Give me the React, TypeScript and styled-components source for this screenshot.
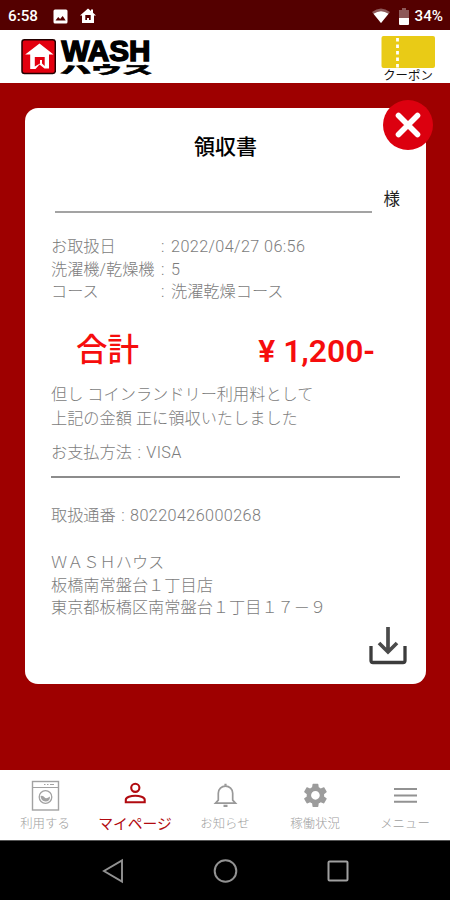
import React from "react";
import styled, { createGlobalStyle } from "styled-components";

const Global = createGlobalStyle`
  * { box-sizing: border-box; }
  html, body { margin: 0; padding: 0; }
  body { font-family: Roboto, "Noto Sans CJK JP", sans-serif; background: #9e0000; }
  svg { display: block; flex: none; }
`;

const Screen = styled.div`
  width: 450px;
  height: 900px;
  display: flex;
  flex-direction: column;
  overflow: hidden;
  background: #9e0000;
`;

const StatusBar = styled.div`
  height: 30px;
  flex: none;
  display: flex;
  align-items: center;
  justify-content: space-between;
  padding: 2px 7px 0 8px;
  background: #540000;
  color: #fff;
  font-size: 15.2px;
  font-weight: 500;
`;

const StatusGroup = styled.div<{ $gap: number }>`
  display: flex;
  align-items: center;
  gap: ${(p) => p.$gap}px;
`;

const Header = styled.header`
  height: 53px;
  flex: none;
  display: flex;
  justify-content: space-between;
  padding: 6px 15px 0 21px;
  background: #fff;
`;

const Brand = styled.div`
  display: flex;
  gap: 5px;
  padding-top: 3px;
`;

const WordMark = styled.div`
  display: flex;
  flex-direction: column;
  width: 92px;
`;

const Coupon = styled.div`
  width: 54px;
  display: flex;
  flex-direction: column;
  align-items: center;
  color: #111;
  font-size: 12.4px;
  line-height: 13px;
  white-space: nowrap;
`;

const CouponLabel = styled.span`
  margin-top: 1px;
`;

const Main = styled.main`
  flex: 1;
  padding: 25px 24px 0 25px;
`;

const Card = styled.section`
  position: relative;
  height: 575.5px;
  padding: 0 26px;
  border-radius: 13px;
  background: #fff;
  color: #7c7c7c;
  font-size: 16.2px;
  font-weight: 300;
  line-height: 22.5px;
  white-space: nowrap;
`;

const CloseButton = styled.button`
  position: absolute;
  top: -8px;
  right: -7px;
  width: 50px;
  height: 50px;
  padding: 0;
  border: 0;
  border-radius: 50%;
  background: #dc000f;
`;

const Title = styled.h1`
  margin: 0;
  padding-top: 24px;
  color: #000;
  font-size: 21px;
  font-weight: 500;
  line-height: 31px;
  text-align: center;
`;

const NameRow = styled.div`
  height: 51px;
  display: flex;
  justify-content: space-between;
  align-items: flex-end;
  padding-left: 4px;
`;

const NameLine = styled.div`
  width: 317px;
  height: 2px;
  margin-bottom: 1px;
  background: #a3a3a3;
`;

const Honorific = styled.span`
  color: #222;
  font-size: 16.5px;
  font-weight: 400;
  margin-bottom: 3px;
`;

const Details = styled.dl`
  display: grid;
  grid-template-columns: 110px 10px auto;
  grid-auto-rows: 22.5px;
  margin: 22px 0 0;
`;

const Term = styled.dt``;
const Value = styled.dd<{ $spaced?: boolean }>`
  margin: 0;
  letter-spacing: ${(p) => (p.$spaced ? 0.4 : 0)}px;
`;

const Total = styled.div`
  display: flex;
  justify-content: space-between;
  align-items: center;
  height: 46px;
  margin-top: 24.5px;
  padding: 0 25px 0 25px;
  color: #f60d0d;
  font-size: 31.5px;
  font-weight: 500;
`;

const Amount = styled.span`
  font-weight: 600;
  font-size: 31.8px;
`;

const Note = styled.p`
  margin: 8.5px 0 0;
  line-height: 24px;
`;

const Inline = styled.p<{ $top: number }>`
  margin: ${(p) => p.$top}px 0 0;
  word-spacing: 1.5px;
`;

const Latin = styled.span`
  letter-spacing: 0.4px;
`;

const Rule = styled.hr`
  height: 2px;
  margin: 11px 0 0;
  border: 0;
  background: #8c8c8c;
`;

const Shop = styled.address`
  margin-top: 25px;
  font-style: normal;
`;

const Download = styled.div`
  display: flex;
  justify-content: flex-end;
  margin: 6.5px -7px 0 0;
`;

const TabBar = styled.nav`
  height: 71px;
  flex: none;
  display: grid;
  grid-template-columns: repeat(5, 90px);
  background: #fff;
  border-bottom: 1px solid #555;
`;

const Tab = styled.div<{ $active?: boolean }>`
  display: flex;
  flex-direction: column;
  align-items: center;
  padding-top: 9px;
  color: ${(p) => (p.$active ? "#b10b10" : "#a0a0a0")};
  font-size: ${(p) => (p.$active ? 14.8 : 12.4)}px;
  font-weight: ${(p) => (p.$active ? 400 : 300)};
  line-height: 18px;
  white-space: nowrap;
`;

const TabLabel = styled.span`
  margin-top: 2px;
`;

const SystemNav = styled.div`
  height: 59px;
  flex: none;
  display: flex;
  justify-content: space-between;
  align-items: center;
  padding: 0 100px;
  background: #000;
`;

const Logo = () => (
  <Brand>
    <svg width="35" height="36" viewBox="21 39 35 36">
      <rect x="22" y="39.8" width="33.3" height="33.8" rx="2.5" fill="#e3000f" stroke="#240000" strokeWidth="1.5" />
      <path d="M39.5 43.5 53.5 54.5H49V68.5H44.5L39.5 64.500 35.5 69H30.2V54.5H25.2Z" fill="#fff" />
      <path d="M34.8 57H44.700V66L42 63.500V60H40V63.500L34.800 66.500Z" fill="#e3000f" />
    </svg>
    <WordMark>
      <svg width="92" height="23" viewBox="0 0 92 23" overflow="visible">
        <text x="0.5" y="21.6" textLength="89" lengthAdjust="spacingAndGlyphs" fontFamily="Liberation Sans" fontWeight="700" fontSize="30" stroke="#000" strokeWidth="1.5">WASH</text>
      </svg>
      <svg width="92" height="14" viewBox="0 0 92 14" overflow="visible">
        <text transform="translate(-1 11.700) scale(1 .37)" textLength="93" lengthAdjust="spacingAndGlyphs" fontFamily="Noto Sans CJK JP" fontWeight="900" fontSize="31" stroke="#000" strokeWidth="1.5">ハウス</text>
      </svg>
    </WordMark>
  </Brand>
);

const CouponIcon = () => (
  <svg width="54" height="32" viewBox="0 0 54 32">
    <rect x=".5" width="53.5" height="32" rx="2" fill="#e9cb16" />
    <path d="M16.5 0V32" stroke="#fff" strokeWidth="2.8" strokeDasharray="3.5 3" strokeDashoffset="-2" />
  </svg>
);

const tabs = [
  {
    label: "利用する",
    icon: (
      <svg width="30" height="34" viewBox="0 0 30 34" fill="none" stroke="#a2a2a2">
        <rect x="2.5" y="2.5" width="26" height="28.5" strokeWidth="1.4" />
        <path d="M2 8.500H29M14 5.500h1.500M17 5.500h1.500M20 5.500h4" strokeWidth="1" />
        <circle cx="15.5" cy="18" r="6.3" strokeWidth="1.3" />
        <path d="M10.500 17q2.500-1 4 1.200t5.500-.8q0 5-4.500 5t-5-5.400Z" fill="#a2a2a2" stroke="none" />
      </svg>
    ),
  },
  {
    label: "マイページ",
    active: true,
    icon: (
      <svg width="30" height="34" viewBox="0 0 30 34" fill="none" stroke="#b10b10" strokeWidth="2.1">
        <circle cx="15.3" cy="8.8" r="4.1" />
        <path d="M5.800 23.200v-2.400C5.800 18 11 16.700 15.200 16.700s9.500 1.300 9.500 4.100v2.400Z" />
      </svg>
    ),
  },
  {
    label: "お知らせ",
    icon: (
      <svg width="30" height="34" viewBox="0 0 30 34" fill="none" stroke="#999" strokeWidth="1.7">
        <path d="M5.500 24.200h20l-2.800-3v-7c0-4-3.200-7-7.200-7s-7.200 3-7.200 7v7Z" />
        <path d="M13.500 26.800h4M15.500 4.800v2" strokeWidth="2.2" />
      </svg>
    ),
  },
  {
    label: "稼働状況",
    icon: (
      <svg width="30" height="34" viewBox="0 0 30 34">
        <path
          transform="translate(.9 1.800) scale(1.210)"
          fill="#9c9c9c"
          d="M19.140 12.940c.04-.3.060-.61.060-.94 0-.32-.02-.64-.07-.94l2.030-1.580c.18-.14.23-.41.12-.61l-1.920-3.320c-.12-.22-.37-.29-.59-.22l-2.390.96c-.5-.38-1.030-.7-1.620-.94l-.36-2.540c-.04-.24-.24-.41-.48-.41h-3.840c-.24 0-.43.17-.47.410l-.36 2.540c-.59.240-1.130.57-1.620.94l-2.390-.96c-.22-.08-.47 0-.59.220L2.740 8.870c-.12.210-.08.470.12.610l2.030 1.580c-.05.3-.09.63-.09.94s.02.640.07.940l-2.030 1.580c-.18.140-.23.410-.12.610l1.920 3.320c.12.220.37.290.59.220l2.390-.96c.5.380 1.030.7 1.620.940l.36 2.540c.05.240.24.410.48.410h3.840c.24 0 .44-.17.470-.41l.36-2.540c.59-.24 1.130-.56 1.620-.94l2.390.96c.22.080.47 0 .59-.22l1.920-3.320c.12-.22.070-.47-.12-.61l-2.010-1.580zM12 15.600c-1.980 0-3.600-1.620-3.600-3.600s1.620-3.600 3.600-3.600 3.600 1.620 3.600 3.600-1.620 3.600-3.600 3.600z"
        />
      </svg>
    ),
  },
  {
    label: "メニュー",
    icon: (
      <svg width="30" height="34" viewBox="0 0 30 34" stroke="#929292" strokeWidth="1.9">
        <path d="M4 10H27M4 16.500H27M4 22.700H27" />
      </svg>
    ),
  },
];

const details = [
  ["お取扱日", "2022/04/27 06:56"],
  ["洗濯機/乾燥機", "5"],
  ["コース", "洗濯乾燥コース"],
];

export default function App() {
  return (
    <Screen>
      <Global />
      <StatusBar>
        <StatusGroup $gap={15}>
          <span>6:58</span>
          <StatusGroup $gap={12}>
            <svg width="15" height="15" viewBox="0 0 15 15">
              <rect x=".5" y=".5" width="14" height="14" rx="1.5" fill="#fff" />
              <path d="m2.500 11.500 2.700-3.500 1.900 2.100 2.600-3.100 3 4.500Z" fill="#540000" />
            </svg>
            <svg width="16" height="16" viewBox="0 0 16 16">
              <path d="M8 .5 11 3V1.500h2v3.200L16 7.500h-2V15H2V7.500H0Z" fill="#fff" />
              <path d="M5.300 7h5.400v5H9v-2H7v2H5.300Z" fill="#540000" />
            </svg>
          </StatusGroup>
        </StatusGroup>
        <StatusGroup $gap={6}>
          <StatusGroup $gap={9}>
            <svg width="18" height="16" viewBox="0 0 18 16">
              <path d="M0 4Q9-3 18 4L9 15Z" fill="#8d5959" />
              <path d="M1.500 5.800Q9 .500 16.500 5.800L9 15Z" fill="#fff" />
            </svg>
            <svg width="10" height="17" viewBox="0 0 10 17">
              <path d="M0 2h3V0h4v2h3v8H0Z" fill="#8d5959" />
              <path d="M0 10h10v6q0 1-1 1H1q-1 0-1-1Z" fill="#fff" />
            </svg>
          </StatusGroup>
          <span>34%</span>
        </StatusGroup>
      </StatusBar>
      <Header>
        <Logo />
        <Coupon>
          <CouponIcon />
          <CouponLabel>クーポン</CouponLabel>
        </Coupon>
      </Header>
      <Main>
        <Card>
          <Title>領収書</Title>
          <NameRow>
            <NameLine />
            <Honorific>様</Honorific>
          </NameRow>
          <Details>
            {details.map(([term, value], i) => (
              <React.Fragment key={term}>
                <Term>{term}</Term>
                <span>:</span>
                <Value $spaced={i === 0}>{value}</Value>
              </React.Fragment>
            ))}
          </Details>
          <Total>
            <span>合計</span>
            <Amount>¥ 1,200-</Amount>
          </Total>
          <Note>
            但し コインランドリー利用料として
            <br />
            上記の金額 正に領収いたしました
          </Note>
          <Inline $top={11.5}>
            お支払方法 : <Latin>VISA</Latin>
          </Inline>
          <Rule />
          <Inline $top={27}>
            取扱通番 : <Latin>80220426000268</Latin>
          </Inline>
          <Shop>
            ＷＡＳＨハウス
            <br />
            板橋南常盤台１丁目店
            <br />
            東京都板橋区南常盤台１丁目１７－９
          </Shop>
          <Download>
            <svg width="38" height="39" viewBox="0 0 38 39" fill="none" stroke="#3c3c3c">
              <path d="M2 20v14.500q0 2 2 2h30q2 0 2-2V20" strokeWidth="3.3" />
              <path d="M19 1v25M10 17l9 9 9-9" strokeWidth="3.7" stroke="#4b4b4b" />
            </svg>
          </Download>
          <CloseButton aria-label="閉じる">
            <svg width="50" height="50" viewBox="0 0 50 50">
              <path d="m15.500 15.500 19 19m0-19-19 19" stroke="#fff" strokeWidth="5.6" strokeLinecap="round" />
            </svg>
          </CloseButton>
        </Card>
      </Main>
      <TabBar>
        {tabs.map((t) => (
          <Tab key={t.label} $active={t.active}>
            {t.icon}
            <TabLabel>{t.label}</TabLabel>
          </Tab>
        ))}
      </TabBar>
      <SystemNav>
        <svg width="25" height="26" viewBox="0 0 25 26" fill="none" stroke="#929292" strokeWidth="1.9">
          <path d="M22 2.500v21L4 13Z" />
        </svg>
        <svg width="26" height="26" viewBox="0 0 26 26" fill="none" stroke="#929292" strokeWidth="2">
          <circle cx="13.5" cy="13" r="10.8" />
        </svg>
        <svg width="25" height="26" viewBox="0 0 25 26" fill="none" stroke="#a0a0a0" strokeWidth="2">
          <rect x="3.5" y="3.5" width="19" height="19" rx="1" />
        </svg>
      </SystemNav>
    </Screen>
  );
}
